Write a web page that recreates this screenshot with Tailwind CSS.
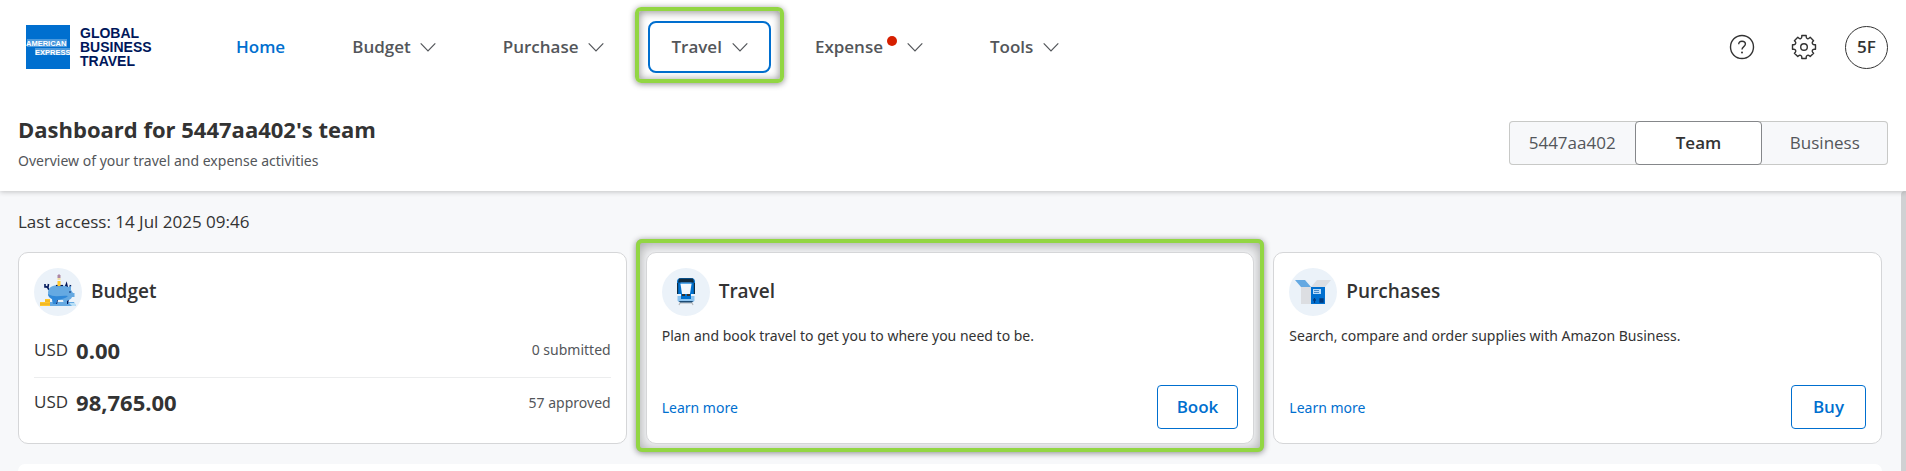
<!DOCTYPE html>
<html lang="en">
<head>
<meta charset="utf-8">
<meta name="viewport" content="width=device-width, initial-scale=1">
<title>Dashboard</title>
<script src="https://cdn.jsdelivr.net/npm/@tailwindcss/browser@4"></script>
</head>
<body class="flex h-screen flex-col overflow-hidden bg-[#f7f8fa] font-['Open_Sans',sans-serif] text-[17px] text-[#333]">
<svg class="hidden" aria-hidden="true">
  <symbol id="chevron" viewBox="0 0 16 16"><path d="M.7 4.400 8 11.800l7.300-7.400" fill="none" stroke="#53565a" stroke-width="1.200"/></symbol>
</svg>

<header class="relative z-10 bg-white shadow-[0_1px_5px_rgba(0,0,0,0.22)]">
  <div class="flex h-[94px] items-center justify-between pl-[26px] pr-[18px]">
    <div class="flex items-center">
      <a href="#" aria-label="American Express Global Business Travel" class="flex w-[187px] items-center gap-[10px]">
        <svg class="size-11" viewBox="0 0 44 44" font-family="Liberation Sans, sans-serif" font-weight="700">
          <rect width="44" height="44" fill="#006fcf"/>
          <path d="M1 14h40v8H1zM9 23h35v7H9z" fill="#fff" opacity=".3"/>
          <text x="0" y="21" fill="#fff" font-size="7.500">AMERICAN</text>
          <text x="9" y="29.500" fill="#fff" font-size="7.500">EXPRESS</text>
        </svg>
        <span class="font-['Liberation_Sans',sans-serif] text-[14px] leading-[14px] font-bold text-[#00175a]">GLOBAL<br>BUSINESS<br>TRAVEL</span>
      </a>
      <nav class="flex items-center gap-[21px] font-semibold text-[#53565a]" aria-label="Main">
        <a href="#" class="flex h-[52px] items-center px-[23px] text-[#006fcf]">Home</a>
        <button class="flex h-[52px] items-center gap-[9px] px-[23px]">Budget <svg class="size-4"><use href="#chevron"/></svg></button>
        <button class="flex h-[52px] items-center gap-2.5 px-[23px]">Purchase <svg class="size-4"><use href="#chevron"/></svg></button>
        <div class="relative">
          <button class="flex h-[52px] items-center gap-2.5 rounded-lg border-2 border-[#006fcf] px-[21px]">Travel <svg class="size-4"><use href="#chevron"/></svg></button>
          <div class="pointer-events-none absolute -inset-x-[13px] -top-[14px] -bottom-[10px] rounded-md border-4 border-[#92d643] shadow-[0_1px_6px_rgba(0,0,0,0.45),inset_0_1px_8px_rgba(0,0,0,0.45)]"></div>
        </div>
        <button class="flex h-[52px] items-center px-[23px]">Expense <span class="mb-3 ml-1 mr-2.5 size-2.5 rounded-full bg-[#d61f00]"></span><svg class="size-4"><use href="#chevron"/></svg></button>
        <button class="flex h-[52px] items-center gap-2.5 px-[23px]">Tools <svg class="size-4"><use href="#chevron"/></svg></button>
      </nav>
    </div>
    <div class="flex items-center">
      <button aria-label="Help" class="mr-9">
        <svg class="size-[26px]" viewBox="0 0 26 26" fill="none" stroke="#333" stroke-width="1.400"><circle cx="13" cy="13" r="11.500"/><path d="M9.700 10.300c0-1.900 1.300-3.100 3.300-3.100s3.400 1.200 3.400 2.900c0 2.600-3.400 2.400-3.400 5.400"/><circle cx="13" cy="18.600" r="1" fill="#333" stroke="none"/></svg>
      </button>
      <button aria-label="Settings" class="mr-7">
        <svg class="size-[26px]" viewBox="0 0 26 26" fill="none" stroke="#333" stroke-width="1.400" stroke-linejoin="round"><path d="M10.800 1.500h4.400v1.300c0 1.700 2 2.500 3.200 1.300l.8-.8 3.400 3.400-.8.8c-1.200 1.200-.4 3.300 1.300 3.300h1.400v4.400h-1.400c-1.700 0-2.500 2-1.300 3.200l.8.8-3.400 3.400-.8-.8c-1.200-1.200-3.200-.4-3.200 1.300v1.400h-4.400v-1.400c0-1.700-2-2.500-3.200-1.300l-.8.8-3.400-3.400.8-.8c1.200-1.200.4-3.200-1.300-3.200H1.500v-4.400h1.400c1.700 0 2.500-2.100 1.300-3.300l-.8-.8 3.400-3.400.8.8c1.200 1.200 3.200.4 3.200-1.300z"/><circle cx="13" cy="13" r="3.300"/></svg>
      </button>
      <button class="size-[43px] rounded-full border border-[#333] font-semibold">5F</button>
    </div>
  </div>

  <div class="flex h-[97px] justify-between px-[18px]">
    <div class="pt-[19px]">
      <h1 class="text-[22px] leading-8 font-bold">Dashboard for 5447aa402's team</h1>
      <p class="pt-1 font-['Noto_Sans',sans-serif] text-[14px] leading-6 text-[#53565a]">Overview of your travel and expense activities</p>
    </div>
    <div class="mt-[27px] grid h-11 w-[379px] grid-cols-3 rounded-[4px] bg-[#f7f8fa] text-[#53565a] ring-1 ring-[#c8c9c7] ring-inset">
      <button>5447aa402</button>
      <button class="rounded-[4px] border border-[#85878a] bg-white font-semibold text-[#333]">Team</button>
      <button>Business</button>
    </div>
  </div>
</header>

<div class="flex min-h-0 flex-1">
  <main class="isolate flex min-w-0 flex-1 flex-col pl-[18px] pr-[19px]">
    <p class="pt-[19px] pb-[18px] leading-6">Last access: 14 Jul 2025 09:46</p>

    <div class="grid grid-cols-3 gap-[19px]">
      <section class="h-[192px] rounded-[10px] border border-[#d5d6d8] bg-white px-[15px] pt-[15px]">
        <div class="flex items-center gap-[9px]">
          <svg class="size-12" viewBox="0 0 48 48">
            <circle cx="24" cy="24" r="24" fill="#ebf2f9"/>
            <path d="M15 34h25l2 4H14z" fill="#65a9e2"/><path d="M35 35h6l1 3h-4z" fill="#b9e0f7"/>
            <path d="M6 34h5v-3h5v7H6z" fill="#ffc72c"/><path d="M11 33h5M6 36h10" stroke="#e0a51c" stroke-width=".8"/>
            <path d="M15 22q-1-3-3-3.500M11 16v3h3l.5-3" fill="none" stroke="#00175a" stroke-width="1.600"/>
            <path d="m31 20 1.500-4 1 4M36 20l.5-3" stroke="#00175a" stroke-width="1.600" fill="none"/>
            <path d="M20 33l1 3h2l1-4M31 33l1 3h2l1-5" fill="#00175a"/>
            <path d="M14 25c0-6 5-8 11-8 4 0 7 1 9 2l3-1v4l2 3h1.500v4H38c-1 3-4 3-5 4v3h-3l-1-4h-6l-1 4h-3l-1-5c-3-1-4-3-4-6z" fill="#65a9e2"/>
            <path d="M14 26c6 4 14 1 20 2-3 3-7 3-11 4l-1 4h-3l-1-5c-2-1-4-3-4-5z" fill="#3088d8"/>
            <path d="M22 17.500h7" stroke="#00175a" stroke-width="1.200"/>
            <circle cx="36" cy="24" r=".8" fill="#00175a"/>
            <path d="M23.500 13h3v5h-3z" fill="#ffc72c"/><path d="M23.500 10h3v2h-3z" fill="#f2dfa0"/><path d="M23.500 7.500 25 6l1.500 1.500V10h-3z" fill="#ac87a4"/>
          </svg>
          <h2 class="pb-0.5 text-[19px] leading-7 font-semibold">Budget</h2>
        </div>
        <div class="mt-2 flex h-[54px] items-center justify-between border-b border-[#ecedee] pb-0.5">
          <p class="flex items-center gap-2"><span>USD</span><b class="text-[22px] leading-8">0.00</b></p>
          <span class="font-['Noto_Sans',sans-serif] text-[14px] text-[#53565a]">0 submitted</span>
        </div>
        <div class="flex h-12 items-center justify-between">
          <p class="flex items-center gap-2"><span>USD</span><b class="text-[22px] leading-8">98,765.00</b></p>
          <span class="font-['Noto_Sans',sans-serif] text-[14px] text-[#53565a]">57 approved</span>
        </div>
      </section>

      <section class="relative flex h-[192px] flex-col rounded-[10px] border border-[#d5d6d8] bg-white px-[15px] pt-[15px] pb-[14px]">
        <div class="pointer-events-none absolute -inset-x-[11px] -top-[14px] -bottom-[9px] rounded-md border-4 border-[#92d643] shadow-[0_1px_6px_rgba(0,0,0,0.45)]"></div>
        <div class="pointer-events-none absolute -inset-x-[11px] -top-[14px] -bottom-[9px] -z-10 rounded-md bg-[#f7f8fa] shadow-[inset_0_2px_14px_4px_rgba(0,0,0,0.35)]"></div>
        <div class="flex items-center gap-[9px]">
          <svg class="size-12" viewBox="0 0 48 48">
            <circle cx="24" cy="24" r="24" fill="#ebf2f9"/>
            <path d="m19 33-2 4M29 33l2 4M17.500 35h13" stroke="#b5b8bc" stroke-width="1.200"/>
            <path d="M15.500 28h17v4q0 2-3 2h-11q-3 0-3-2z" fill="#8dc4f0"/>
            <path d="M16.500 33h15l-2 1.500h-11z" fill="#1b4a74"/>
            <path d="M15 14q0-4 4-4h10q4 0 4 4v12H15z" fill="#0071cf"/>
            <path d="M17 10.500h14l1 4H16z" fill="#112c40"/>
            <path d="M15 15h1.200v11H15zM31.800 15H33v11h-1.200z" fill="#112c40"/>
            <path d="M18.500 14.500h11v2h-11z" fill="#5ba9e8"/>
            <path d="M18.500 16h11L28 26h-8z" fill="#f4f8fc"/>
            <path d="M19 26h10v5H19z" fill="#0071cf"/><path d="M20 26h3v2h-3zM25 26h3v2h-3z" fill="#333"/>
          </svg>
          <h2 class="pb-0.5 text-[19px] leading-7 font-semibold">Travel</h2>
        </div>
        <p class="mt-2 font-['Noto_Sans',sans-serif] text-[14px] leading-6">Plan and book travel to get you to where you need to be.</p>
        <div class="mt-auto flex items-center justify-between">
          <a href="#" class="font-['Noto_Sans',sans-serif] text-[14px] text-[#006fcf]">Learn more</a>
          <button class="h-11 rounded-[4px] border border-[#006fcf] px-[19px] font-semibold text-[#006fcf]">Book</button>
        </div>
      </section>

      <section class="flex h-[192px] flex-col rounded-[10px] border border-[#d5d6d8] bg-white px-[15px] pt-[15px] pb-[14px]">
        <div class="flex items-center gap-[9px]">
          <svg class="size-12" viewBox="0 0 48 48">
            <circle cx="24" cy="24" r="24" fill="#ebf2f9"/>
            <path d="M6 12h10l6 7H12z" fill="#65a9e2"/>
            <path d="M28 12h14l-6 7H22z" fill="#dcdee2"/>
            <path d="M12 19h10v17H12z" fill="#dcdee2"/>
            <path d="M22 19h14v17H22z" fill="#006fcf"/>
            <path d="M24 21h8v5h-8z" fill="#b9dcfa"/><path d="M25 22.500h5M25 24.500h5" stroke="#4789c8"/>
            <path d="M25.500 30v5M24 32h3M31 31h3v3h-3z" stroke="#003b80" stroke-width="1.300" fill="#003b80"/>
          </svg>
          <h2 class="pb-0.5 text-[19px] leading-7 font-semibold">Purchases</h2>
        </div>
        <p class="mt-2 font-['Noto_Sans',sans-serif] text-[14px] leading-6">Search, compare and order supplies with Amazon Business.</p>
        <div class="mt-auto flex items-center justify-between">
          <a href="#" class="font-['Noto_Sans',sans-serif] text-[14px] text-[#006fcf]">Learn more</a>
          <button class="h-11 rounded-[4px] border border-[#006fcf] px-[21px] font-semibold text-[#006fcf]">Buy</button>
        </div>
      </section>
    </div>

    <section class="mt-5 flex-1 rounded-t-[10px] bg-white"></section>
  </main>
  <div class="w-[5px] rounded-tl-sm bg-[#d0d1d3]"></div>
</div>
</body>
</html>
